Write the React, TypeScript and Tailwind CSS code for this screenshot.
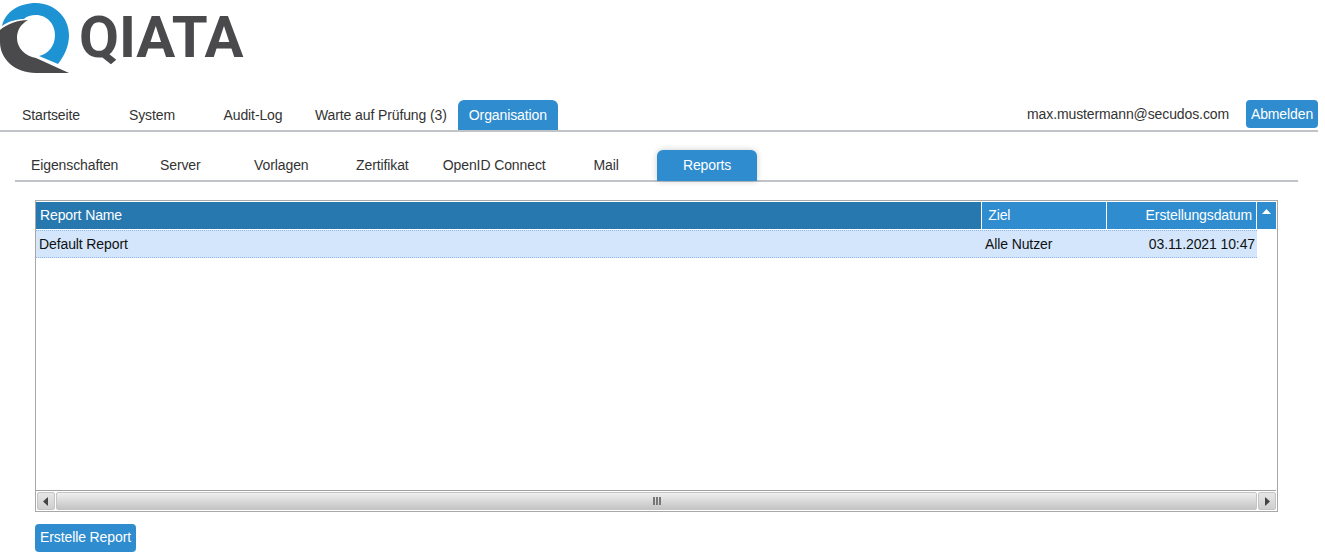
import React from 'react';

const mainTabs = [
  { label: 'Startseite' },
  { label: 'System' },
  { label: 'Audit-Log' },
  { label: 'Warte auf Prüfung (3)' },
  { label: 'Organisation', active: true },
];

const subTabs = [
  { label: 'Eigenschaften' },
  { label: 'Server' },
  { label: 'Vorlagen' },
  { label: 'Zertifikat' },
  { label: 'OpenID Connect' },
  { label: 'Mail' },
  { label: 'Reports', active: true },
];

const Logo = () => (
  <div className="flex h-[100px] items-start">
    <svg width="72" height="76" viewBox="0 0 72 76" className="mt-px shrink-0">
      <path
        d="M2 25C5 11 19 2 36 2c18 0 33 14 33 32 0 12-5 21-11 29L39 55c9-2 16-10 16-21 0-11-8-20-19-20-5 0-9 1-12 4-7 0-15 2-22 7z"
        fill="#1e93d3"
      />
      <path
        d="M0 29c7-6 18-10 28-10-7 4-11 10-11 18 0 10 8 18 19 20l33 15H36C15 72 0 58 0 41z"
        fill="#4a494b"
      />
    </svg>
    <span className="mt-[4px] ml-[7px] font-['Roboto',sans-serif] text-[58px] leading-[67px] font-bold tracking-[-0.1px] text-[#4a494b]">
      QIATA
    </span>
  </div>
);

const ScrollButton = ({ dir }: { dir: 'left' | 'right' }) => (
  <div className="flex h-[18px] w-[18px] shrink-0 items-center justify-center rounded-[2px] border border-[#c4c4c4] bg-gradient-to-b from-[#e6e6e6] to-[#cfcfcf]">
    <svg width="6" height="9" viewBox="0 0 6 9">
      <path d={dir === 'left' ? 'M5 0v9L0 4.5z' : 'M1 0v9l5-4.5z'} fill="#444" />
    </svg>
  </div>
);

const App: React.FC = () => {
  return (
    <div className="h-[558px] w-[1325px] overflow-hidden bg-white font-['Liberation_Sans',Arial,sans-serif] text-[14px] tracking-[-0.11px] text-[#333]">
      <Logo />

      {/* main navigation */}
      <div className="flex h-[32px] w-[1318px] items-start justify-between border-b-2 border-[#c0c4c8]">
        <div className="flex gap-px pl-px">
          {mainTabs.map((tab) => (
            <div
              key={tab.label}
              className={
                tab.active
                  ? 'flex h-[30px] min-w-[100px] items-center justify-center rounded-t-[6px] bg-[#2e8ccf] px-[11px] text-white -ml-px'
                  : 'flex h-[30px] min-w-[100px] items-center justify-center px-[11px]'
              }
            >
              {tab.label}
            </div>
          ))}
        </div>
        <div className="flex items-center">
          <span className="mr-[17px] mt-px">max.mustermann@secudos.com</span>
          <button className="h-[28px] w-[72px] rounded-[4px] bg-[#2e8ccf] text-center text-white">
            Abmelden
          </button>
        </div>
      </div>

      {/* sub navigation */}
      <div className="mt-[18px] ml-[15px] flex h-[32px] w-[1283px] items-start gap-px border-b-2 border-[#c0c4c8] pl-[6.5px]">
        {subTabs.map((tab) => (
          <div
            key={tab.label}
            className={
              tab.active
                ? 'flex h-[31px] min-w-[100px] items-center justify-center rounded-t-[6px] bg-[#2e8ccf] px-[9.5px] text-white shadow-[0_0_6px_rgba(0,0,0,0.2)]'
                : 'flex h-[31px] min-w-[100px] items-center justify-center px-[9.5px] first:pr-[11px]'
            }
          >
            {tab.label}
          </div>
        ))}
      </div>

      {/* report table */}
      <div className="mt-[18px] ml-[35px] flex h-[312px] w-[1243px] flex-col border border-[#a8a8a8] pt-px pr-px">
        <div className="flex h-[27px] text-white">
          <div className="flex w-[946px] items-center bg-[#2878b0] pl-[4px]">Report Name</div>
          <div className="ml-px flex w-[124px] items-center bg-[#2e8ccf] pl-[6px]">Ziel</div>
          <div className="ml-px flex w-[149px] items-center justify-end bg-[#2e8ccf] pr-[4px]">
            Erstellungsdatum
          </div>
          <div className="ml-px flex w-[19px] justify-center bg-[#2e8ccf] pt-[7px]">
            <svg width="9" height="5" viewBox="0 0 9 5">
              <path d="M0 5L4.5 0 9 5z" fill="#fff" />
            </svg>
          </div>
        </div>
        <div className="mt-px flex h-[28px] w-[1221px] items-center border-y border-dotted border-[#8fb4e8] bg-[#d4e6fc] text-[#111]">
          <div className="w-[947px] pl-[3px]">Default Report</div>
          <div className="w-[122px] pl-[2px]">Alle Nutzer</div>
          <div className="flex-1 pr-[2px] text-right">03.11.2021 10:47</div>
        </div>
        <div className="flex-1" />
        <div className="flex h-[21px] items-center border-t border-[#a0a0a0] bg-white pl-px">
          <ScrollButton dir="left" />
          <div className="relative mx-px h-[18px] flex-1 rounded-[2px] border border-[#c4c4c4] bg-gradient-to-b from-[#efefef] to-[#c4c4c4]">
            <div className="absolute top-[4px] left-1/2 flex -translate-x-1/2 gap-px">
              <div className="h-[8px] w-[2px] bg-[#777]" />
              <div className="h-[8px] w-[2px] bg-[#777]" />
              <div className="h-[8px] w-[2px] bg-[#777]" />
            </div>
          </div>
          <ScrollButton dir="right" />
        </div>
      </div>

      <button className="mt-[12px] ml-[35px] h-[28px] w-[101px] rounded-[4px] bg-[#2e8ccf] pb-px text-center text-white">
        Erstelle Report
      </button>
    </div>
  );
};

export default App;
